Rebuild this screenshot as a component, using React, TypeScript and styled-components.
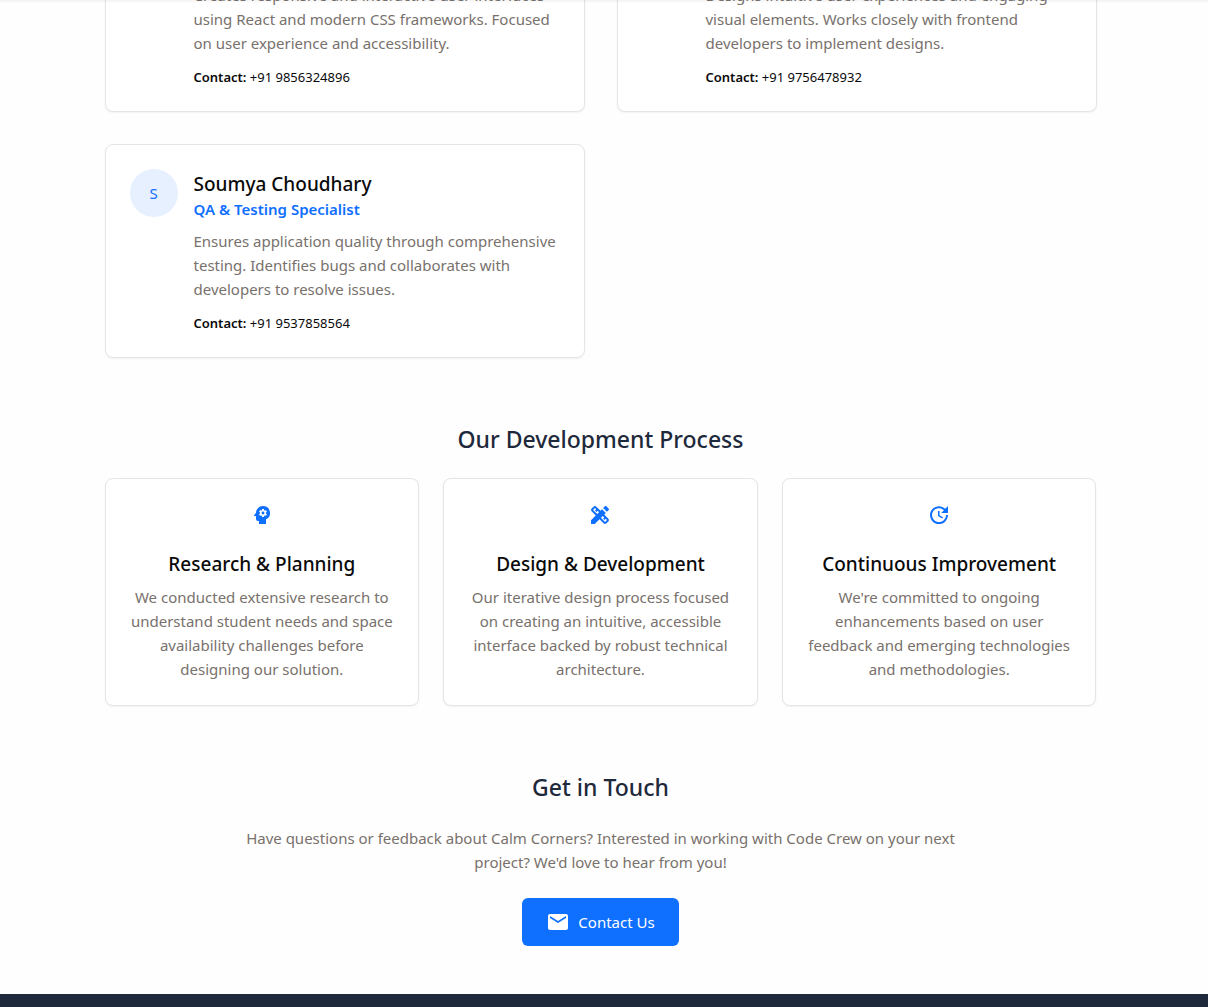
import React from "react";
import styled, { createGlobalStyle } from "styled-components";
import { MdDesignServices, MdEmail, MdPsychology, MdUpdate } from "react-icons/md";
import type { IconType } from "react-icons";

const color = {
  page: "#fefefe",
  card: "#ffffff",
  border: "#e5e5e5",
  text: "#0a0a0a",
  heading: "#1e293b",
  muted: "#78716c",
  primary: "#0f6fff",
  primarySoft: "#e7f0ff",
};

const GlobalStyle = createGlobalStyle`
  *, *::before, *::after { box-sizing: border-box; }
  body {
    margin: 0;
    background: ${color.page};
    color: ${color.text};
    font-family: "Noto Sans", "Open Sans", sans-serif;
    font-size: 15px;
    line-height: 24px;
  }
  h2, h3, p { margin: 0; }
`;

const Page = styled.div`
  display: flex;
  flex-direction: column;
  min-height: 100vh;
  overflow: hidden;
`;

const HeaderShadow = styled.div`
  position: fixed;
  inset: 0 0 auto 0;
  height: 3px;
  background: linear-gradient(rgba(0, 0, 0, 0.05), rgba(0, 0, 0, 0));
`;

const Main = styled.main`
  display: flex;
  flex-direction: column;
  gap: 64px;
  width: 100%;
  max-width: 1031px;
  margin: -17px auto 0;
  padding: 0 23px 48px 16px;
`;

const TeamGrid = styled.section`
  display: grid;
  grid-template-columns: repeat(2, minmax(0, 1fr));
  gap: 32px;
`;

const Card = styled.article`
  padding: 24px;
  background: ${color.card};
  border: 1px solid ${color.border};
  border-radius: 8px;
  box-shadow: 0 1px 2px rgba(0, 0, 0, 0.05);
`;

const MemberCard = styled(Card)<{ $continued?: boolean }>`
  display: grid;
  grid-template-columns: 48px minmax(0, 1fr);
  column-gap: 16px;
  ${(p) => p.$continued && "padding-top: 0; border-top: 0; border-radius: 0 0 8px 8px;"}
`;

const Avatar = styled.div`
  display: flex;
  align-items: center;
  justify-content: center;
  width: 48px;
  height: 48px;
  border-radius: 50%;
  background: ${color.primarySoft};
  color: ${color.primary};
`;

const MemberInfo = styled.div`
  grid-column: 2;
`;

const CardTitle = styled.h3`
  padding-top: 2px;
  font-size: 19px;
  font-weight: 500;
  line-height: 26px;
`;

const Role = styled.p`
  margin-bottom: 8px;
  color: ${color.primary};
  font-weight: 600;
`;

const Description = styled.p`
  color: ${color.muted};
`;

const Contact = styled.p`
  margin-top: 12px;
  font-size: 13px;
  line-height: 20px;

  strong { font-weight: 600; }
`;

const Section = styled.section`
  display: flex;
  flex-direction: column;
  gap: 24px;
`;

const SectionTitle = styled.h2`
  padding-top: 2px;
  color: ${color.heading};
  font-size: 23px;
  font-weight: 500;
  line-height: 30px;
  text-align: center;
`;

const ProcessGrid = styled.div`
  display: grid;
  grid-template-columns: repeat(3, minmax(0, 1fr));
  gap: 24px;
`;

const ProcessCard = styled(Card)`
  display: flex;
  flex-direction: column;
  align-items: center;
  text-align: center;

  svg {
    margin-bottom: 22px;
    color: ${color.primary};
  }

  ${CardTitle} { margin-bottom: 8px; }
`;

const TouchSection = styled(Section)`
  align-items: center;
  text-align: center;
`;

const TouchText = styled(Description)`
  max-width: 752px;
`;

const ContactButton = styled.button`
  display: inline-flex;
  align-items: center;
  gap: 8px;
  height: 48px;
  padding: 0 24px;
  border: 0;
  border-radius: 6px;
  background: ${color.primary};
  color: #ffffff;
  font: inherit;
  cursor: pointer;
`;

const Footer = styled.footer`
  flex: 1;
  min-height: 13px;
  background: ${color.heading};
`;

type Member = { name?: string; role?: string; description: string; phone: string };

const members: Member[] = [
  {
    description:
      "Creates responsive and interactive user interfaces using React and modern CSS frameworks. Focused on user experience and accessibility.",
    phone: "+91 9856324896",
  },
  {
    description:
      "Designs intuitive user experiences and engaging visual elements. Works closely with frontend developers to implement designs.",
    phone: "+91 9756478932",
  },
  {
    name: "Soumya Choudhary",
    role: "QA & Testing Specialist",
    description:
      "Ensures application quality through comprehensive testing. Identifies bugs and collaborates with developers to resolve issues.",
    phone: "+91 9537858564",
  },
];

const steps: { icon: IconType; title: string; description: string }[] = [
  {
    icon: MdPsychology,
    title: "Research & Planning",
    description:
      "We conducted extensive research to understand student needs and space availability challenges before designing our solution.",
  },
  {
    icon: MdDesignServices,
    title: "Design & Development",
    description:
      "Our iterative design process focused on creating an intuitive, accessible interface backed by robust technical architecture.",
  },
  {
    icon: MdUpdate,
    title: "Continuous Improvement",
    description:
      "We're committed to ongoing enhancements based on user feedback and emerging technologies and methodologies.",
  },
];

export default function App() {
  return (
    <Page>
      <GlobalStyle />
      <HeaderShadow />
      <Main>
        <TeamGrid>
          {members.map(({ name, role, description, phone }) => (
            <MemberCard key={phone} $continued={!name}>
              {name && <Avatar>{name[0]}</Avatar>}
              <MemberInfo>
                {name && <CardTitle>{name}</CardTitle>}
                {role && <Role>{role}</Role>}
                <Description>{description}</Description>
                <Contact>
                  <strong>Contact:</strong> {phone}
                </Contact>
              </MemberInfo>
            </MemberCard>
          ))}
        </TeamGrid>

        <Section>
          <SectionTitle>Our Development Process</SectionTitle>
          <ProcessGrid>
            {steps.map(({ icon: Icon, title, description }) => (
              <ProcessCard key={title}>
                <Icon size={24} aria-hidden />
                <CardTitle>{title}</CardTitle>
                <Description>{description}</Description>
              </ProcessCard>
            ))}
          </ProcessGrid>
        </Section>

        <TouchSection>
          <SectionTitle>Get in Touch</SectionTitle>
          <TouchText>
            Have questions or feedback about Calm Corners? Interested in working with Code Crew on
            your next project? We'd love to hear from you!
          </TouchText>
          <ContactButton type="button">
            <MdEmail size={24} aria-hidden />
            Contact Us
          </ContactButton>
        </TouchSection>
      </Main>
      <Footer />
    </Page>
  );
}
